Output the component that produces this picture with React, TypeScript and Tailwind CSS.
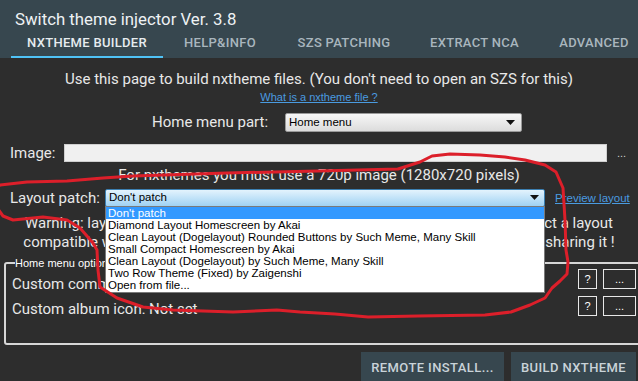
import React from "react";

const tabs = [
  { label: "NXTHEME BUILDER", w: "w-[152px]", active: true },
  { label: "HELP&INFO", w: "w-[114px]", active: false },
  { label: "SZS PATCHING", w: "w-[134px]", active: false },
  { label: "EXTRACT NCA", w: "w-[127px]", active: false },
  { label: "ADVANCED", w: "w-[112px]", active: false },
];

const layouts = [
  "Don't patch",
  "Diamond Layout Homescreen by Akai",
  "Clean Layout (Dogelayout) Rounded Buttons by Such Meme, Many Skill",
  "Small Compact Homescreen by Akai",
  "Clean Layout (Dogelayout) by Such Meme, Many Skill",
  "Two Row Theme (Fixed) by Zaigenshi",
  "Open from file...",
];

// freehand red circle drawn over the screenshot
const scribble: [number, number][] = [
  [398, 169], [420, 162], [432, 156], [450, 154], [480, 155], [505, 157], [525, 160],
  [545, 165], [556, 172], [563, 188], [565, 220], [566, 250], [568, 262], [567, 274],
  [560, 281], [552, 288], [545, 298], [530, 305], [511, 312], [485, 315], [418, 316],
  [368, 317], [335, 314], [300, 312], [277, 310], [233, 312], [173, 310], [143, 307],
  [117, 298], [100, 287], [98, 270], [97, 250], [93, 243], [80, 228], [67, 220],
  [43, 217], [13, 220], [3, 216], [-5, 205], [-5, 190], [0, 185], [27, 182], [67, 181],
  [103, 178], [133, 176], [227, 173], [318, 171], [398, 169],
];

function Arrow() {
  return (
    <svg width="9" height="5" viewBox="0 0 9 5">
      <path d="M0 0h9L4.5 5z" fill="#111" />
    </svg>
  );
}

function SmallButton({ children }: { children: React.ReactNode }) {
  return (
    <div className="flex h-[20px] items-center justify-center border border-[#e8e8e8] font-['Liberation_Sans',sans-serif] text-[11px] leading-none text-white">
      {children}
    </div>
  );
}

export default function App() {
  return (
    <div className="relative h-[381px] w-[638px] overflow-hidden bg-[#2d2d2d] font-['Roboto',sans-serif] text-[#e8e8e8]">
      {/* header */}
      <div className="h-[58px] bg-[#37474f]">
        <div className="pl-[15px] pt-[9px] text-[16.8px] leading-[20px] text-[#eef2f4]">
          Switch theme injector Ver. 3.8
        </div>
        <div className="flex pl-[11px]">
          {tabs.map((t) => (
            <div
              key={t.label}
              className={`${t.w} h-[29px] shrink-0 pt-[6px] text-center text-[13px] font-medium leading-[15px] tracking-[0.3px] border-b-2 ${
                t.active ? "border-[#4fc3f7] text-[#e6ecef]" : "border-transparent text-[#a9b6be]"
              }`}
            >
              {t.label}
            </div>
          ))}
        </div>
      </div>

      {/* builder page */}
      <div className="mt-[12px] text-center text-[15px] leading-[18px]">
        Use this page to build nxtheme files. (You don't need to open an SZS for this)
      </div>
      <div className="mt-[3px] text-center font-['Liberation_Sans',sans-serif] text-[11px] leading-[12px]">
        <span className="text-[#4a9be0] underline">What is a nxtheme file ?</span>
      </div>

      <div className="mt-[10px] flex h-[19px] items-center pl-[152px]">
        <div className="w-[133px] text-[15px] leading-[19px]">Home menu part:</div>
        <div className="flex h-[19px] w-[237px] items-center justify-between rounded-[2px] border border-[#9a9a9a] bg-gradient-to-b from-[#f7f7f7] to-[#dcdcdc] pl-[3px] pr-[6px] font-['Liberation_Sans',sans-serif] text-[11.5px] text-black">
          <span>Home menu</span>
          <Arrow />
        </div>
      </div>

      <div className="mt-[12px] flex h-[18px] items-center">
        <div className="w-[64px] pl-[10px] text-[15px] leading-[18px]">Image:</div>
        <div className="h-[18px] w-[543px] border border-[#cfcfcf] bg-[#f0f0f0]" />
        <div className="ml-[10px] font-['Liberation_Sans',sans-serif] text-[11px] leading-[12px] text-[#cfcfcf]">...</div>
      </div>

      <div className="mt-[4px] text-center text-[15px] leading-[18px]">
        For nxthemes you must use a 720p image (1280x720 pixels)
      </div>

      <div className="mt-[5px] flex h-[17px] items-center">
        <div className="w-[105px] pl-[10px] text-[15px] leading-[18px]">Layout patch:</div>
        <div className="flex h-[18px] w-[440px] items-center justify-between rounded-[2px] border border-[#3c7fb1] bg-gradient-to-b from-[#e3f3fd] to-[#9fd2f3] pl-[3px] pr-[5px] font-['Liberation_Sans',sans-serif] text-[11.5px] text-black">
          <span>Don't patch</span>
          <Arrow />
        </div>
        <div className="ml-[10px] font-['Liberation_Sans',sans-serif] text-[11.5px] leading-[12px] text-[#4a9be0] underline">
          Preview layout
        </div>
      </div>

      <div className="mt-[8px] text-center text-[15px] leading-[19px]">
        <div>Warning: layout patches are made for one specific firmware, make sure to select a layout</div>
        <div>compatible with your console firmware version and always test themes before sharing it !</div>
      </div>

      <fieldset className="ml-[4px] mt-[5px] h-[88px] w-[650px] rounded-[3px] border-2 border-[#d6d6d6] pl-[6px]">
        <legend className="ml-[3px] font-['Liberation_Sans',sans-serif] text-[11px] leading-[12px] text-white">
          Home menu options
        </legend>
        <div className="flex">
          <div className="mt-[3px] flex-1 text-[15px] leading-[25px]">
            <div>Custom common.szs: Not set</div>
            <div>Custom album icon: Not set</div>
          </div>
          <div className="mr-[16px] flex flex-col gap-[7px]">
            {[0, 1].map((i) => (
              <div key={i} className="flex gap-[6px]">
                <div className="w-[19px]">
                  <SmallButton>?</SmallButton>
                </div>
                <div className="w-[33px]">
                  <SmallButton>...</SmallButton>
                </div>
              </div>
            ))}
          </div>
        </div>
      </fieldset>

      <div className="mt-[7px] flex justify-end gap-[7px] pr-[2px]">
        <div className="flex h-[32px] w-[143px] items-center justify-center bg-[#37474f] text-[13px] font-medium tracking-[0.4px] text-[#c9d3d9]">
          REMOTE INSTALL...
        </div>
        <div className="flex h-[32px] w-[125px] items-center justify-center bg-[#37474f] text-[13px] font-medium tracking-[0.4px] text-[#c9d3d9]">
          BUILD NXTHEME
        </div>
      </div>

      {/* open dropdown list */}
      <div className="absolute left-[105px] top-[206px] w-[440px] border border-[#7a7a7a] bg-white pb-[1px] font-['Liberation_Sans',sans-serif] text-[11.5px] leading-[12px] text-black">
        {layouts.map((l, i) => (
          <div key={l} className={`h-[12px] pl-[2px] ${i === 0 ? "bg-[#3399ff] text-white" : ""}`}>
            {l}
          </div>
        ))}
      </div>

      <svg className="pointer-events-none absolute left-0 top-0" width="638" height="381">
        <polyline
          points={scribble.map((p) => p.join(",")).join(" ")}
          fill="none"
          stroke="#dc1f2a"
          strokeWidth="3"
          strokeLinejoin="round"
          strokeLinecap="round"
        />
      </svg>
    </div>
  );
}
